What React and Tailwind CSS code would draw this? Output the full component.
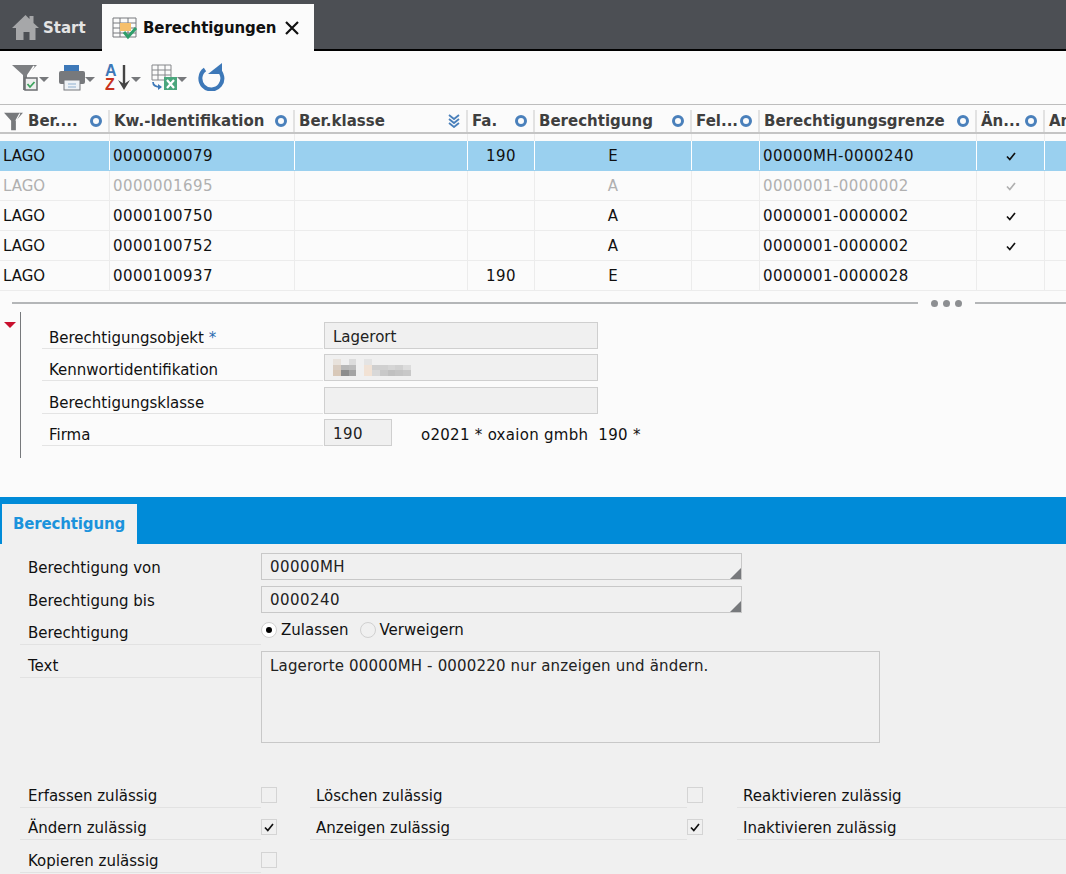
const font = { fontFamily: '"DejaVu Sans", Verdana, sans-serif' };

const COLS = 'grid-cols-[110px_185px_173px_67px_157px_68px_217px_68px_21px]';

const HEADERS = [
  { label: 'Ber....', filter: true, dot: true },
  { label: 'Kw.-Identifikation', dot: true },
  { label: 'Ber.klasse', sorted: true },
  { label: 'Fa.', dot: true },
  { label: 'Berechtigung', dot: true },
  { label: 'Fel...', dot: true },
  { label: 'Berechtigungsgrenze', dot: true },
  { label: 'Än...', dot: true },
  { label: 'An' },
];

const ROWS = [
  { obj: 'LAGO', id: '0000000079', firm: '190', ber: 'E', grenze: '00000MH-0000240', check: true, selected: true },
  { obj: 'LAGO', id: '0000001695', firm: '', ber: 'A', grenze: '0000001-0000002', check: true, muted: true },
  { obj: 'LAGO', id: '0000100750', firm: '', ber: 'A', grenze: '0000001-0000002', check: true },
  { obj: 'LAGO', id: '0000100752', firm: '', ber: 'A', grenze: '0000001-0000002', check: true },
  { obj: 'LAGO', id: '0000100937', firm: '190', ber: 'E', grenze: '0000001-0000028' },
];

function Caret() {
  return <span className="mt-[4px] h-0 w-0 border-x-[5px] border-t-[5px] border-x-transparent border-t-[#77797c]" />;
}

function FilterIcon({ size = 24 }) {
  return (
    <svg width={size} height={size} viewBox="0 0 24 24">
      <path d="M0 1h24L15 11v12H9V11z" fill="#77797c" />
      <path d="M15 11l5-9" stroke="#fff" strokeWidth="1.5" />
    </svg>
  );
}

function Toolbar() {
  return (
    <div className="flex shrink-0 h-[54px] items-center gap-[10px] pl-[12px] pb-[1px] bg-[#fbfbfb] border-b border-[#bdbdbd]">
      <div className="flex items-center">
        <svg width="27" height="27" viewBox="0 0 27 27">
          <path d="M0 1h25l-10 10v15h-4V11z" fill="#7d7f82" />
          <path d="M16 11l6-9" stroke="#fff" strokeWidth="1.5" />
          <rect x="13" y="14" width="12" height="12" fill="#eee" stroke="#6b6d70" strokeWidth="1.5" />
          <path d="M15.500 20l2.500 3 4.500-5" fill="none" stroke="#3da35d" strokeWidth="1.8" />
        </svg>
        <Caret />
      </div>
      <div className="flex items-center">
        <svg width="26" height="27" viewBox="0 0 26 27">
          <rect x="5" y="1" width="15" height="9" fill="#3d78b8" />
          <rect x="0" y="7" width="26" height="13" rx="2" fill="#77797c" />
          <rect x="5" y="16" width="16" height="10" fill="#eef2f6" stroke="#77797c" />
          <path d="M9 20h8M9 23h8" stroke="#8fb0d0" />
        </svg>
        <Caret />
      </div>
      <div className="flex items-center">
        <svg width="26" height="27" viewBox="0 0 26 27" className="overflow-visible" style={{ fontFamily: '"Liberation Sans", sans-serif' }}>
          <text x="0" y="12" fontSize="16" fontWeight="700" fill="#3d78b8">A</text>
          <text x="0" y="26" fontSize="16" fontWeight="700" fill="#c8321e">Z</text>
          <path d="M19 1v22" stroke="#444" strokeWidth="2.400" />
          <path d="M13 16l6 10 6-10-6 4z" fill="#444" />
        </svg>
        <Caret />
      </div>
      <div className="flex items-center">
        <svg width="26" height="27" viewBox="0 0 26 27">
          <path d="M1 1h19v15H1zM1 6h19M1 11h19M7 1v15M14 1v15" fill="none" stroke="#85878a" />
          <path d="M2 18c0 4 3 5 8 5" fill="none" stroke="#3d78b8" strokeWidth="1.7" />
          <path d="M7 20l4 3-4 3z" fill="#3d78b8" />
          <rect x="13" y="13" width="13" height="13" fill="#4aa67c" />
          <path d="M16 16l7 8M23 16l-7 8" stroke="#fff" strokeWidth="2.200" />
        </svg>
        <Caret />
      </div>
      <svg width="28" height="28" viewBox="0 0 28 28">
        <path d="M8 6.500A11 11 0 1 0 20 6" fill="none" stroke="#3d78b8" strokeWidth="4" />
        <path d="M11 11h14V0z" fill="#3d78b8" />
      </svg>
    </div>
  );
}

function HeaderCell({ h, i }) {
  return (
    <div className={`flex items-center justify-between min-w-0 overflow-hidden pl-[4px] text-[15px] font-bold text-[#3f3f3f] ${i < 8 ? 'pr-[6px] border-r-2 border-[#e2e2e2]' : ''}`}>
      <span className="flex items-center whitespace-nowrap">
        {h.filter && <span className="mr-[5px]"><FilterIcon size={19} /></span>}
        {h.label}
      </span>
      {h.dot && <span className="shrink-0 h-[12px] w-[12px] rounded-full border-[3px] border-[#4a80bb]" />}
      {h.sorted && (
        <svg width="12" height="14" viewBox="0 0 12 14" className="shrink-0">
          <path d="M1 1l5 4 5-4M1 5l5 4 5-4M1 9l5 4 5-4" fill="none" stroke="#4a80bb" strokeWidth="1.8" />
        </svg>
      )}
    </div>
  );
}

function Check() {
  return (
    <svg width="10" height="9" viewBox="0 0 10 9">
      <path d="M1 4.500l2.800 3L9 1" fill="none" stroke="currentColor" strokeWidth="1.7" />
    </svg>
  );
}

function Row({ r }) {
  const color = r.selected
    ? 'bg-[#9ad0ef] text-[#111]'
    : r.muted
      ? 'text-[#b0b0b0]'
      : 'text-[#111]';
  const line = r.selected ? 'border-white' : 'border-[#ececec]';
  const cell = `flex items-center h-full pt-[2px] border-r ${line}`;
  return (
    <div className={`grid ${COLS} h-[30px] text-[15px] border-b ${r.selected ? 'border-transparent' : 'border-[#ececec]'} ${color}`}>
      <div className={`${cell} pl-[3px]`}>{r.obj}</div>
      <div className={`${cell} pl-[3px] tracking-[0.45px]`}>{r.id}</div>
      <div className={cell} />
      <div className={`${cell} justify-center tracking-[0.45px]`}>{r.firm}</div>
      <div className={`${cell} justify-center`}>{r.ber}</div>
      <div className={cell} />
      <div className={`${cell} pl-[3px] tracking-[0.45px]`}>{r.grenze}</div>
      <div className={`${cell} justify-center`}>{r.check && <Check />}</div>
      <div />
    </div>
  );
}

function Table() {
  return (
    <div className="shrink-0 bg-[#fbfbfb]">
      <div className={`grid ${COLS} h-[29px] border-b-2 border-[#c4c4c4] pt-[5px]`}>
        {HEADERS.map((h, i) => <HeaderCell key={i} h={h} i={i} />)}
      </div>
      <div className={`grid ${COLS} h-[7px]`}>
        {HEADERS.map((h, i) => <div key={i} className={i < 8 ? 'border-r border-[#ececec]' : ''} />)}
      </div>
      {ROWS.map((r) => <Row key={r.id} r={r} />)}
    </div>
  );
}

function Splitter() {
  return (
    <div className="flex shrink-0 items-center h-[20px] pt-[4px] pl-[12px] bg-[#fbfbfb]">
      <div className="h-[2px] w-[906px] bg-[#b4b6b8]" />
      <div className="flex gap-[5px] mx-[13px]">
        <span className="h-[7px] w-[7px] rounded-full bg-[#8d8f92]" />
        <span className="h-[7px] w-[7px] rounded-full bg-[#8d8f92]" />
        <span className="h-[7px] w-[7px] rounded-full bg-[#8d8f92]" />
      </div>
      <div className="h-[2px] flex-1 bg-[#b4b6b8]" />
    </div>
  );
}

function Mosaic() {
  const cells = [
    [0, 0, '#e8e2dc'], [2, 0, '#dcdcdc'], [4, 0, '#e4e4e4'],
    [0, 1, '#d9cdc2'], [1, 1, '#b8b8b8'], [2, 1, '#bcbcbc'], [4, 1, '#f0e2d6'], [5, 1, '#cfcfcf'], [6, 1, '#d0d0d0'], [7, 1, '#d5d5d5'], [8, 1, '#d0d0d0'], [9, 1, '#dcdcdc'],
    [0, 2, '#d8c8b8'], [1, 2, '#8d8d8d'], [2, 2, '#a4a4a4'], [4, 2, '#f2e2d4'], [5, 2, '#d8d8d8'], [6, 2, '#c8c8c8'], [7, 2, '#c0c0c0'], [8, 2, '#c4c4c4'], [9, 2, '#c8c8c8'],
  ];
  return (
    <svg width="78" height="17" viewBox="0 0 80 17" shapeRendering="crispEdges">
      {cells.map(([x, y, c]) => <rect key={`${x}-${y}`} x={x * 8} y={y * 5.6} width="8" height="5.6" fill={c} />)}
    </svg>
  );
}

function Field({ label, children, width = 'w-[274px]' }) {
  return (
    <div className="flex h-[27px] mb-[5.4px] items-stretch">
      <div className="w-[281px] pl-[7px] pt-[6px] text-[15px] leading-[20px] text-[#111] border-b border-[#e4e4e4] mr-[1px]">{label}</div>
      <div className={`${width} flex items-center pl-[8px] pt-[3px] bg-[#f0f0f0] border border-[#cfcfcf] text-[15px] text-[#222]`}>{children}</div>
    </div>
  );
}

function Detail() {
  return (
    <div className="flex shrink-0 h-[186px] pt-[1px] bg-[#fbfbfb]">
      <div className="w-[20px] pt-[10px] pl-[4px]">
        <span className="block h-0 w-0 border-x-[6px] border-t-[6px] border-x-transparent border-t-[#c8102e]" />
      </div>
      <div className="h-[146px] pl-[21px] pt-[10px] border-l border-[#77797c]">
        <Field label={<>Berechtigungsobjekt <span className="text-[#2a6db0]">*</span></>}>Lagerort</Field>
        <Field label="Kennwortidentifikation"><span className="-mt-[3px]"><Mosaic /></span></Field>
        <Field label="Berechtigungsklasse" />
        <div className="flex items-start">
          <div className="flex-none">
            <Field label="Firma" width="w-[68px]"><span className="tracking-[0.45px]">190</span></Field>
          </div>
          <span className="ml-[29px] pt-[5px] text-[15px] tracking-[0.28px] text-[#111] whitespace-pre">o2021 * oxaion gmbh  190 *</span>
        </div>
      </div>
    </div>
  );
}

function Combo({ label, value }) {
  return (
    <div className="flex h-[27px] mb-[6px]">
      <div className="w-[241px] pl-[8px] pt-[4px] text-[15px] text-[#111]">{label}</div>
      <div className="relative flex items-center w-[481px] pl-[8px] pt-[2px] border border-[#c8c8c8] text-[15px] tracking-[0.45px] text-[#222]">
        {value}
        <span className="absolute right-0 bottom-0 h-0 w-0 border-b-[11px] border-l-[11px] border-b-[#77797c] border-l-transparent" />
      </div>
    </div>
  );
}

function Radio({ checked, label }) {
  return (
    <span className="flex items-center gap-[4px]">
      <span className={`flex items-center justify-center h-[16px] w-[16px] rounded-full border border-[#d0d0d0] ${checked ? 'bg-white' : ''}`}>
        {checked && <span className="h-[6px] w-[6px] rounded-full bg-black" />}
      </span>
      {label}
    </span>
  );
}

function Box({ checked }) {
  return (
    <span className="flex shrink-0 mt-[7px] items-center justify-center h-[16px] w-[16px] border border-[#d4d4d4] text-[#111]">
      {checked && <Check />}
    </span>
  );
}

function Perm({ label, checked, pad = 'pl-[8px]' }) {
  return (
    <div className="flex h-[28px] mb-[4.4px] text-[15px] text-[#111]">
      <span className={`flex-1 h-full ${pad} pt-[5px] border-b border-[#e2e2e2] whitespace-nowrap`}>{label}</span>
      {checked !== undefined && <Box checked={checked} />}
    </div>
  );
}

function TabPanel() {
  return (
    <div className="flex-1 bg-[#f0f0f0]">
      <div className="flex items-end h-[47px] pl-[2px] bg-[#008bd8]">
        <div className="flex items-center h-[40px] w-[135px] pl-[11px] pt-[1px] bg-[#f0f0f0] text-[15px] tracking-[-0.15px] font-bold text-[#1b93dc]">Berechtigung</div>
      </div>
      <div className="pl-[20px] pt-[9px]">
        <Combo label="Berechtigung von" value="00000MH" />
        <Combo label="Berechtigung bis" value="0000240" />
        <div className="flex h-[32px]">
          <div className="w-[241px] pl-[8px] pt-[4px] h-[26px] text-[15px] leading-[20px] text-[#111] border-b border-[#e2e2e2]">Berechtigung</div>
          <div className="flex items-start gap-[11px] text-[15px] text-[#111]"><Radio checked label="Zulassen" /><Radio label="Verweigern" /></div>
        </div>
        <div className="flex h-[92px]">
          <div className="w-[241px] h-[27px] pl-[8px] pt-[1px] text-[15px] leading-[29px] text-[#111] border-b border-[#e2e2e2]">Text</div>
          <div className="w-[619px] pl-[8px] pt-[3px] border border-[#c8c8c8] text-[15px] tracking-[0.17px] text-[#222]">Lagerorte 00000MH - 0000220 nur anzeigen und ändern.</div>
        </div>
        <div className="flex mt-[37px]">
          <div className="w-[257px]">
            <Perm label="Erfassen zulässig" checked={false} />
            <Perm label="Ändern zulässig" checked />
            <Perm label="Kopieren zulässig" checked={false} />
          </div>
          <div className="w-[393px] ml-[33px]">
            <Perm label="Löschen zulässig" checked={false} pad="pl-[6px]" />
            <Perm label="Anzeigen zulässig" checked pad="pl-[6px]" />
          </div>
          <div className="flex-1 ml-[34px]">
            <Perm label="Reaktivieren zulässig" pad="pl-[6px]" />
            <Perm label="Inaktivieren zulässig" pad="pl-[6px]" />
          </div>
        </div>
      </div>
    </div>
  );
}

export default function App() {
  return (
    <div className="flex flex-col h-[874px] w-[1066px] overflow-hidden" style={font}>
      <div className="flex shrink-0 items-end h-[51px] bg-[#4c4f54] border-b-2 border-black">
        <div className="flex items-center w-[102px] h-full pl-[12px] pt-[5px] text-[15px] font-bold text-[#e4e4e4]">
          <svg width="27" height="26" viewBox="0 0 27 26" className="mr-[4px] -mt-[1px]">
            <path d="M0 14L13.500 1l4 4V2h4v7l5.500 5h-3.500v12h-6v-8h-6v8H4V14z" fill="#a6a7a9" />
          </svg>
          <span className="mt-[3px]">Start</span>
        </div>
        <div className="flex items-center w-[212px] h-[47px] -mb-[2px] pl-[10px] bg-[#fbfbfb] text-[15px] tracking-[-0.1px] font-bold text-[#111]">
          <svg width="27" height="23" viewBox="0 0 27 23" className="mr-[4px] mt-[2px]">
            <path d="M1 1h23v19H1zM1 6h23M1 11h23M1 16h23M8 1v19M16 1v19" fill="none" stroke="#77797c" />
            <rect x="8" y="6" width="11" height="8" fill="#f6bf6b" />
            <path d="M12 15l4 5 8-9" fill="none" stroke="#2e9e6a" strokeWidth="3" />
          </svg>
          <span className="mt-[1px]">Berechtigungen</span>
          <svg width="14" height="14" viewBox="0 0 14 14" className="ml-[9px]">
            <path d="M1 1l12 12M13 1L1 13" stroke="#111" strokeWidth="2.200" />
          </svg>
        </div>
      </div>
      <Toolbar />
      <Table />
      <Splitter />
      <Detail />
      <TabPanel />
    </div>
  );
}
